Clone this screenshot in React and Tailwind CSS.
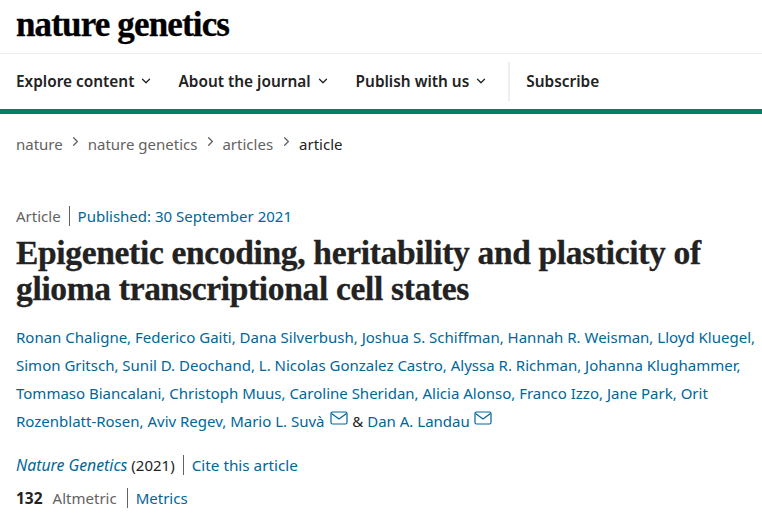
import React from "react";
import { ChevronDown, ChevronRight } from "lucide-react";

const authorLines = [
  ["Ronan Chaligne", "Federico Gaiti", "Dana Silverbush", "Joshua S. Schiffman", "Hannah R. Weisman", "Lloyd Kluegel"],
  ["Simon Gritsch", "Sunil D. Deochand", "L. Nicolas Gonzalez Castro", "Alyssa R. Richman", "Johanna Klughammer"],
  ["Tommaso Biancalani", "Christoph Muus", "Caroline Sheridan", "Alicia Alonso", "Franco Izzo", "Jane Park", "Orit"],
];

const Mail = ({ className }) => (
  <svg width="18" height="14" viewBox="0 0 18 14" fill="none" stroke="#069" strokeWidth="1.2" className={"inline-block relative -top-[5px] " + className}>
    <rect x="1" y="1" width="16" height="12" rx="1.5" />
    <path d="M1.5 2.5 9 8l7.5-5.5" />
  </svg>
);

const NavItem = ({ label, className }) => (
  <a className={"flex items-center gap-[5px] " + className}>
    {label}
    <ChevronDown size={14} strokeWidth={2.2} />
  </a>
);

const Crumb = ({ label }) => (
  <>
    <span className="text-[#626262]">{label}</span>
    <ChevronRight size={15} strokeWidth={2} className="text-[#626262] ml-[5.5px] mr-[4.5px] -mt-[5px]" />
  </>
);

export default function App() {
  return (
    <div className="w-[762px] h-[518px] overflow-hidden bg-white text-[#222] font-['Noto_Sans',sans-serif]">
      <header className="h-[54px] border-b border-[#eee] pl-[16px]">
        <div className="font-['Liberation_Serif',serif] font-bold text-[35px] leading-[50px] tracking-[-0.85px] text-black [-webkit-text-stroke:0.3px_black]">
          nature genetics
        </div>
      </header>
      <nav className="h-[55px] flex items-center pl-[16px] text-[15.4px] font-semibold text-[#222]">
        <NavItem label="Explore content" className="mr-[25px]" />
        <NavItem label="About the journal" className="mr-[26px]" />
        <NavItem label="Publish with us" className="mr-[20px]" />
        <div className="w-[2px] h-[39px] bg-[#eee] mr-[16px]" />
        <a>Subscribe</a>
      </nav>
      <div className="h-[5px] bg-[#008064]" />
      <div className="flex items-center pl-[16px] pt-[18px] text-[15px] leading-[24px]">
        <Crumb label="nature" />
        <Crumb label="nature genetics" />
        <Crumb label="articles" />
        <span className="text-[#222] ml-[1px]">article</span>
      </div>
      <main className="pl-[16px] pt-[50px]">
        <div className="flex items-center text-[15px] leading-[20px]">
          <span className="text-[#626262] pr-[8px] border-r border-[#626262]">Article</span>
          <span className="text-[#069] pl-[8px]">Published: 30 September 2021</span>
        </div>
        <h1 className="font-['Liberation_Serif',serif] font-bold text-[33.5px] leading-[36px] tracking-[-0.33px] text-[#222] mt-[9px] [-webkit-text-stroke:0.3px_#222]">
          Epigenetic encoding, heritability and plasticity of
          <br />
          glioma transcriptional cell states
        </h1>
        <div className="mt-[16px] text-[15px] leading-[28px] text-[#069] whitespace-nowrap">
          {authorLines.map((line, i) => (
            <div key={i}>{line.join(", ")}{i < 2 ? "," : ""}</div>
          ))}
          <div>
            Rozenblatt-Rosen, Aviv Regev, Mario L. Suvà <Mail className="ml-[2px]" /> <span className="text-[#222]">&amp;</span> Dan A. Landau <Mail />
          </div>
        </div>
        <div className="flex items-center mt-[20px] text-[15px] leading-[20px]">
          <span className="pr-[8px] border-r border-[#626262]">
            <i className="text-[#069] text-[15.8px]">Nature Genetics</i> <span className="text-[#222]">(2021)</span>
          </span>
          <span className="text-[#069] pl-[8px] text-[15.3px]">Cite this article</span>
        </div>
        <div className="flex items-center mt-[13px] text-[15px] leading-[20px]">
          <b className="font-bold text-[#222] mr-[10px] text-[15.5px]">132</b>
          <span className="text-[#626262] pr-[10px] border-r border-[#626262]">Altmetric</span>
          <span className="text-[#069] pl-[8px]">Metrics</span>
        </div>
      </main>
    </div>
  );
}
